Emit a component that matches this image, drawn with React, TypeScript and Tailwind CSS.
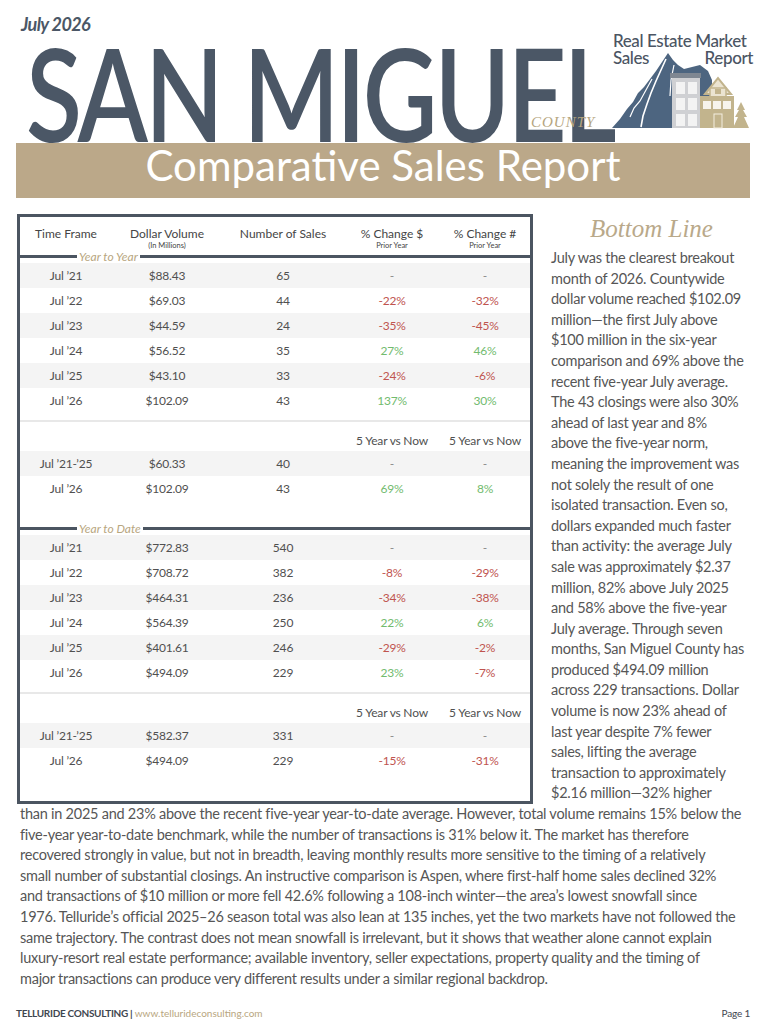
import React from "react";

type Cell = { t: string; c?: "r" | "g" | "d" };
type Row = [string, string, string, Cell, Cell];

const block1: Row[] = [
  ["Jul ’21", "$88.43", "65", { t: "-", c: "d" }, { t: "-", c: "d" }],
  ["Jul ’22", "$69.03", "44", { t: "-22%", c: "r" }, { t: "-32%", c: "r" }],
  ["Jul ’23", "$44.59", "24", { t: "-35%", c: "r" }, { t: "-45%", c: "r" }],
  ["Jul ’24", "$56.52", "35", { t: "27%", c: "g" }, { t: "46%", c: "g" }],
  ["Jul ’25", "$43.10", "33", { t: "-24%", c: "r" }, { t: "-6%", c: "r" }],
  ["Jul ’26", "$102.09", "43", { t: "137%", c: "g" }, { t: "30%", c: "g" }],
];
const block1b: Row[] = [
  ["Jul ’21-’25", "$60.33", "40", { t: "-", c: "d" }, { t: "-", c: "d" }],
  ["Jul ’26", "$102.09", "43", { t: "69%", c: "g" }, { t: "8%", c: "g" }],
];
const block2: Row[] = [
  ["Jul ’21", "$772.83", "540", { t: "-", c: "d" }, { t: "-", c: "d" }],
  ["Jul ’22", "$708.72", "382", { t: "-8%", c: "r" }, { t: "-29%", c: "r" }],
  ["Jul ’23", "$464.31", "236", { t: "-34%", c: "r" }, { t: "-38%", c: "r" }],
  ["Jul ’24", "$564.39", "250", { t: "22%", c: "g" }, { t: "6%", c: "g" }],
  ["Jul ’25", "$401.61", "246", { t: "-29%", c: "r" }, { t: "-2%", c: "r" }],
  ["Jul ’26", "$494.09", "229", { t: "23%", c: "g" }, { t: "-7%", c: "r" }],
];
const block2b: Row[] = [
  ["Jul ’21-’25", "$582.37", "331", { t: "-", c: "d" }, { t: "-", c: "d" }],
  ["Jul ’26", "$494.09", "229", { t: "-15%", c: "r" }, { t: "-31%", c: "r" }],
];

const colCls = (c?: string) =>
  c === "r" ? "text-[#c0544f]" : c === "g" ? "text-[#72bb6e]" : "text-[#8a8a8a]";

const GRID = "grid grid-cols-[92px_110px_122px_96px_90px]";

function DataRow({ r, shade }: { r: Row; shade: boolean }) {
  return (
    <div
      className={`${GRID} h-[25px] items-center text-center text-[12px] tracking-[-0.2px] text-[#505050] ${
        shade ? "bg-[#f4f4f4]" : "bg-white"
      }`}
    >
      <div>{r[0]}</div>
      <div>{r[1]}</div>
      <div>{r[2]}</div>
      <div className={colCls(r[3].c)}>{r[3].t}</div>
      <div className={colCls(r[4].c)}>{r[4].t}</div>
    </div>
  );
}

function SectionLine({ label }: { label: string }) {
  return (
    <div className="flex items-center h-[3px]">
      <div className="w-[57px] h-[3px] bg-[#4b5561]" />
      <span className="px-[2px] text-[12px] leading-none italic text-[#b8a680] whitespace-nowrap">
        {label}
      </span>
      <div className="flex-1 h-[3px] bg-[#4b5561]" />
    </div>
  );
}

function FiveYearHead() {
  return (
    <div className={`${GRID} h-[20px] items-center text-center text-[12px] tracking-[-0.2px] text-[#505050]`}>
      <div />
      <div />
      <div />
      <div className="whitespace-nowrap">5 Year vs Now</div>
      <div className="whitespace-nowrap">5 Year vs Now</div>
    </div>
  );
}

const rightLines = [
  "July was the clearest breakout",
  "month of 2026. Countywide",
  "dollar volume reached $102.09",
  "million—the first July above",
  "$100 million in the six-year",
  "comparison and 69% above the",
  "recent five-year July average.",
  "The 43 closings were also 30%",
  "ahead of last year and 8%",
  "above the five-year norm,",
  "meaning the improvement was",
  "not solely the result of one",
  "isolated transaction. Even so,",
  "dollars expanded much faster",
  "than activity: the average July",
  "sale was approximately $2.37",
  "million, 82% above July 2025",
  "and 58% above the five-year",
  "July average. Through seven",
  "months, San Miguel County has",
  "produced $494.09 million",
  "across 229 transactions. Dollar",
  "volume is now 23% ahead of",
  "last year despite 7% fewer",
  "sales, lifting the average",
  "transaction to approximately",
  "$2.16 million—32% higher",
];

const fullLines = [
  "than in 2025 and 23% above the recent five-year year-to-date average. However, total volume remains 15% below the",
  "five-year year-to-date benchmark, while the number of transactions is 31% below it. The market has therefore",
  "recovered strongly in value, but not in breadth, leaving monthly results more sensitive to the timing of a relatively",
  "small number of substantial closings. An instructive comparison is Aspen, where first-half home sales declined 32%",
  "and transactions of $10 million or more fell 42.6% following a 108-inch winter—the area’s lowest snowfall since",
  "1976. Telluride’s official 2025–26 season total was also lean at 135 inches, yet the two markets have not followed the",
  "same trajectory. The contrast does not mean snowfall is irrelevant, but it shows that weather alone cannot explain",
  "luxury-resort real estate performance; available inventory, seller expectations, property quality and the timing of",
  "major transactions can produce very different results under a similar regional backdrop.",
];

function Logo() {
  return (
    <div className="relative w-[147px] h-[100px] mt-[32px] mr-[13px] shrink-0">
      <svg
        className="absolute left-0 top-0"
        width="147"
        height="100"
        viewBox="606 32 147 100"
      >
        {/* mountain */}
        <polygon
          points="612,128 620,119 627,109 633,102 638,93 644,87 650,79 656,71 662,62 668,53 673,60 678,65 684,69 692,67 700,65 708,71 712,80 712,128"
          fill="#4d6580"
        />
        <polyline
          points="666,59 661,70 656,81 651,93 647,104 643,116 641,127"
          fill="none"
          stroke="#ffffff"
          strokeWidth="1.6"
        />
        <polyline
          points="652,79 646,90 640,101 634,108 630,117"
          fill="none"
          stroke="#ffffff"
          strokeWidth="1.2"
        />
        <polyline
          points="674,65 671,80 670,96"
          fill="none"
          stroke="#ffffff"
          strokeWidth="1.2"
        />
        {/* gray building */}
        <rect x="670" y="73" width="31" height="5" fill="#7f8792" />
        <rect x="672" y="78" width="28" height="50" fill="#cfd0d3" />
        <rect x="676" y="82" width="9" height="12" fill="#f3f3f3" />
        <rect x="688" y="82" width="9" height="12" fill="#f3f3f3" />
        <rect x="676" y="98" width="9" height="12" fill="#f3f3f3" />
        <rect x="688" y="98" width="9" height="12" fill="#f3f3f3" />
        <rect x="676" y="114" width="9" height="12" fill="#f3f3f3" />
        <rect x="688" y="114" width="9" height="12" fill="#f3f3f3" />
        {/* gold house */}
        <polygon points="705,94 718,78 731,94" fill="#ebe4d1" stroke="#c2b48d" strokeWidth="2" />
        <rect x="710" y="88" width="16" height="9" fill="#ebe4d1" stroke="#c2b48d" strokeWidth="1.5" />
        <rect x="715" y="89" width="6" height="5" fill="#c2b48d" />
        <rect x="700" y="96" width="34" height="32" fill="#c2b48d" />
        <rect x="703" y="101" width="8" height="8" fill="#f7f4ec" />
        <rect x="713" y="101" width="8" height="8" fill="#f7f4ec" />
        <rect x="723" y="101" width="8" height="8" fill="#f7f4ec" />
        <rect x="714" y="114" width="8" height="14" fill="none" stroke="#f3eee0" strokeWidth="1" />
        {/* tree */}
        <polygon
          points="741,102 745,110 743,110 747,117 744,117 749,128 733,128 738,117 735,117 739,110 737,110"
          fill="#c2b48d"
        />
      </svg>
      <div className="relative pl-[7px] text-[17px] leading-[17px] font-medium tracking-[-0.4px] text-[#4b5563] font-['Lato',sans-serif]">
        <div className="whitespace-nowrap">Real Estate Market</div>
        <div className="flex justify-between">
          <span>Sales</span>
          <span>Report</span>
        </div>
      </div>
    </div>
  );
}

export default function App() {
  return (
    <div className="w-[766px] h-[1024px] bg-white overflow-hidden font-['Lato',sans-serif]">
      {/* header */}
      <div className="flex h-[143px]">
        <div className="flex-1 min-w-0">
          <div className="pl-[21px] pt-[14px] text-[18px] leading-[20px] font-bold italic tracking-[-0.6px] text-[#4b5766]">
            July 2026
          </div>
          <div className="relative mt-[13px] h-[90px] pl-[26px]">
            <div className="origin-left scale-x-[0.79] whitespace-nowrap text-[130px] leading-[90px] font-semibold tracking-[-0.03em] text-[#4b5766]">
              SAN MIGUEL
            </div>
            <span className="absolute left-[531px] top-[68px] text-[15px] leading-none italic tracking-[1px] text-[#b5a57e] font-['Liberation_Serif',serif]">
              COUNTY
            </span>
          </div>
        </div>
        <Logo />
      </div>

      {/* band */}
      <div className="mx-[16px] h-[55px] bg-[#bba889] text-center text-white text-[42px] leading-[45px]">
        Comparative Sales Report
      </div>

      {/* body */}
      <div className="flex mt-[16px]">
        <div className="ml-[17px] w-[516px] shrink-0 border-[3px] border-[#4b5561] pb-[2px]">
          <div className={`${GRID} h-[38px] pt-[10px] text-center text-[#454545]`}>
            <div className="text-[12px] leading-[14px]">Time Frame</div>
            <div>
              <div className="text-[12px] leading-[14px]">Dollar Volume</div>
              <div className="text-[7.5px] leading-[10px]">(In Millions)</div>
            </div>
            <div className="text-[12px] leading-[14px]">Number of Sales</div>
            <div>
              <div className="text-[12px] leading-[14px]">% Change $</div>
              <div className="text-[7.5px] leading-[10px]">Prior Year</div>
            </div>
            <div>
              <div className="text-[12px] leading-[14px]">% Change #</div>
              <div className="text-[7.5px] leading-[10px]">Prior Year</div>
            </div>
          </div>
          <SectionLine label="Year to Year" />
          <div className="mt-[5px]">
            {block1.map((r, i) => (
              <DataRow key={i} r={r} shade={i % 2 === 0} />
            ))}
          </div>
          <div className="mt-[7px] h-[2px] bg-[#e8e8e8]" />
          <div className="mt-[9px]">
            <FiveYearHead />
            {block1b.map((r, i) => (
              <DataRow key={i} r={r} shade={i % 2 === 0} />
            ))}
          </div>
          <div className="mt-[26px]">
            <SectionLine label="Year to Date" />
          </div>
          <div className="mt-[5px]">
            {block2.map((r, i) => (
              <DataRow key={i} r={r} shade={i % 2 === 0} />
            ))}
          </div>
          <div className="mt-[7px] h-[2px] bg-[#e8e8e8]" />
          <div className="mt-[9px]">
            <FiveYearHead />
            {block2b.map((r, i) => (
              <DataRow key={i} r={r} shade={i % 2 === 0} />
            ))}
          </div>
        </div>

        <div className="ml-[18px] w-[201px] shrink-0">
          <div className="h-[34px] text-center text-[25px] leading-[30px] italic text-[#b9a98a] font-['Liberation_Serif',serif]">
            Bottom Line
          </div>
          <div className="text-[14.5px] leading-[20.6px] tracking-[-0.25px] text-[#565656]">
            {rightLines.map((l, i) => (
              <div key={i} className="whitespace-nowrap">
                {l}
              </div>
            ))}
          </div>
        </div>
      </div>

      <div className="px-[20px] text-[14.5px] leading-[20.6px] tracking-[-0.25px] text-[#565656]">
        {fullLines.map((l, i) => (
          <div key={i} className="whitespace-nowrap">
            {l}
          </div>
        ))}
      </div>

      <div className="mt-[16px] h-[16px] px-[16px] flex items-center justify-between text-[10px] leading-[16px]">
        <div className="whitespace-nowrap">
          <span className="font-bold tracking-[-0.3px] text-[#3f4650]">TELLURIDE CONSULTING |</span>{" "}
          <span className="text-[#b8a680]">www.tellurideconsulting.com</span>
        </div>
        <div className="text-[#3f4650] tracking-[-0.2px]">Page 1</div>
      </div>
    </div>
  );
}
